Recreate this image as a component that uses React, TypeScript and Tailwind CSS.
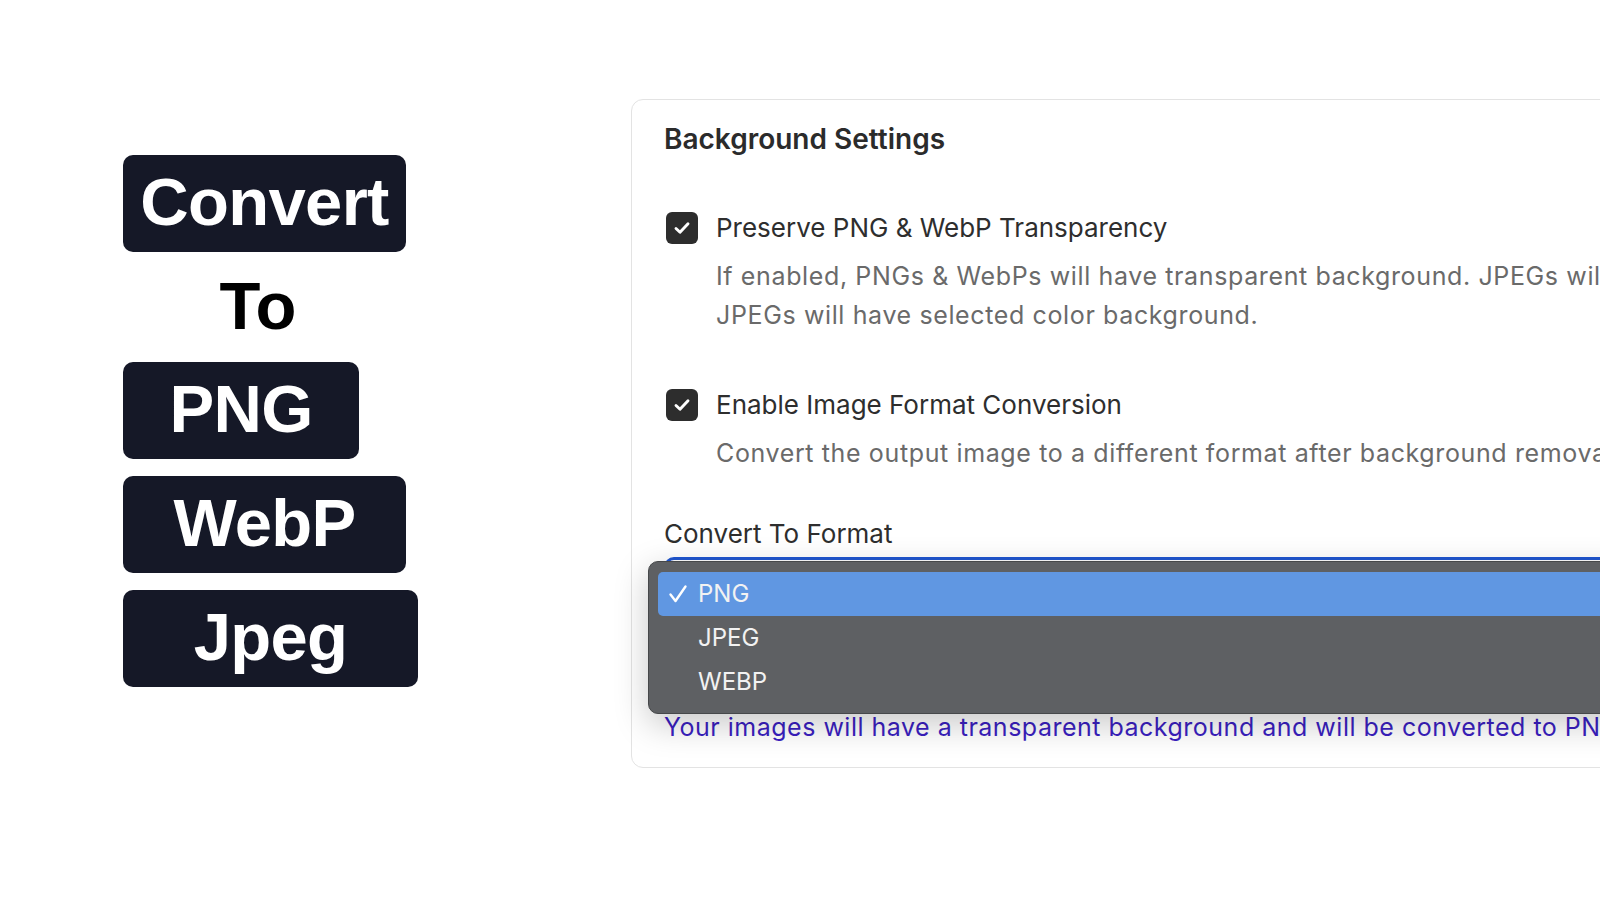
import React from "react";

const boxes = [
  { label: "PNG", w: "w-[236px]" },
  { label: "WebP", w: "w-[283px]" },
  { label: "Jpeg", w: "w-[295px]" },
];

function Tag({ children, className }: { children: React.ReactNode; className: string }) {
  return (
    <div
      className={`${className} h-[97px] rounded-[10px] bg-[#151827] flex items-center justify-center text-white text-[67px] font-bold leading-none tracking-[-0.01em]`}
    >
      <span className="-mt-[4px]">{children}</span>
    </div>
  );
}

function CheckBox() {
  return (
    <div className="ml-[2px] w-[32px] h-[32px] shrink-0 rounded-[6px] bg-[#2d2d2d] flex items-center justify-center">
      <svg width="20" height="20" viewBox="0 0 20 20" fill="none">
        <path d="M4 10.5 L8 14.3 L16 5.8" stroke="white" strokeWidth="2.9" strokeLinecap="round" strokeLinejoin="round" />
      </svg>
    </div>
  );
}

function Option({ label, selected }: { label: string; selected?: boolean }) {
  return (
    <div
      className={`h-[44px] flex items-center rounded-[5px] pl-[10px] ${selected ? "bg-[#6097e2]" : ""}`}
    >
      <span className="w-[30px] flex items-center">
        {selected && (
          <svg width="20" height="20" viewBox="0 0 20 20" fill="none">
            <path d="M2.5 10.5 L7.5 17 L17.5 2.5" stroke="white" strokeWidth="2.4" strokeLinecap="round" strokeLinejoin="round" />
          </svg>
        )}
      </span>
      <span className="text-[24px] text-[#f2f2f2] leading-none">{label}</span>
    </div>
  );
}

export default function App() {
  return (
    <div className="w-[1600px] h-[900px] overflow-hidden bg-white flex font-['Inter',sans-serif]">
      {/* left promo */}
      <div className="w-[631px] shrink-0 pl-[123px] pt-[155px] font-['Liberation_Sans',Arial,sans-serif]">
        <Tag className="w-[283px]">Convert</Tag>
        <div className="w-[270px] h-[110px] flex items-center justify-center text-black text-[67px] font-bold leading-none">
          <span className="-mt-[4px]">To</span>
        </div>
        <div className="flex flex-col gap-[17px]">
          {boxes.map((b) => (
            <Tag key={b.label} className={b.w}>
              {b.label}
            </Tag>
          ))}
        </div>
      </div>

      {/* settings card */}
      <div className="relative mt-[99px] w-[1100px] h-[669px] shrink-0 rounded-[12px] border border-[#e3e3e3] bg-white pt-[23px] px-[32px]">
        <h2 className="h-[32px] leading-[32px] text-[28px] font-semibold text-[#2b2b2b]">Background Settings</h2>

        <div className="mt-[57px] flex items-center gap-[18px]">
          <CheckBox />
          <span className="leading-[32px] text-[26px] text-[#2e2e2e]">Preserve PNG &amp; WebP Transparency</span>
        </div>
        <div className="mt-[13px] pl-[52px] text-[25px] leading-[39px] text-[#6a6a6a] tracking-[0.025em] whitespace-nowrap">
          <p>If enabled, PNGs &amp; WebPs will have transparent background. JPEGs will</p>
          <p>JPEGs will have selected color background.</p>
        </div>

        <div className="mt-[54px] flex items-center gap-[18px]">
          <CheckBox />
          <span className="leading-[32px] text-[26px] text-[#2e2e2e]">Enable Image Format Conversion</span>
        </div>
        <div className="mt-[13px] pl-[52px] text-[25px] leading-[39px] text-[#6a6a6a] tracking-[0.025em] whitespace-nowrap">
          <p>Convert the output image to a different format after background removal.</p>
        </div>

        <div className="mt-[45px] leading-[32px] text-[26px] text-[#2e2e2e]">Convert To Format</div>
        <div className="mt-[7px] h-[56px] rounded-[10px] border-[3px] border-[#1f56d0] bg-white" />

        <p className="mt-[98px] leading-[32px] text-[25px] text-[#3b1fc1] tracking-[0.02em] whitespace-nowrap">
          Your images will have a transparent background and will be converted to PNG.
        </p>

        {/* native select popup */}
        <div className="absolute left-[16px] top-[461px] w-[1000px] h-[153px] rounded-[10px] border border-[#46484a] bg-[#5e6063] pt-[10px] px-[9px] shadow-[0_10px_34px_rgba(0,0,0,0.22)]">
          <Option label="PNG" selected />
          <Option label="JPEG" />
          <Option label="WEBP" />
        </div>
      </div>
    </div>
  );
}
